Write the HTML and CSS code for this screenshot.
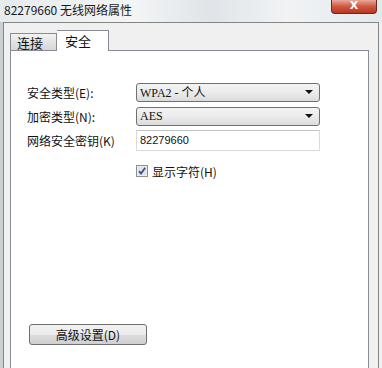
FILE: index.html
```html
<!DOCTYPE html>
<html>
<head>
    <meta charset="utf-8">
    <title>82279660 无线网络属性</title>
    <link rel="stylesheet" href="styles.css">
</head>
<body>
    <div class="janela">
        <div class="barra-titulo">
            <span class="titulo">82279660 无线网络属性</span>
            <span class="fechar">X</span>
        </div>
        <div class="dialogo">
            <div class="abas">
                <div class="aba">连接</div>
                <div class="aba ativa">安全</div>
            </div>
            <div class="painel">
                <div class="linha">
                    <span class="rotulo">安全类型(E):</span>
                    <div class="combo"><span class="valor serif">WPA2 - 个人</span><span class="seta"></span></div>
                </div>
                <div class="linha">
                    <span class="rotulo">加密类型(N):</span>
                    <div class="combo"><span class="valor serif">AES</span><span class="seta"></span></div>
                </div>
                <div class="linha linha-chave">
                    <span class="rotulo">网络安全密钥(K)</span>
                    <div class="campo">82279660</div>
                </div>
                <div class="linha linha-check">
                    <span class="rotulo"></span>
                    <label class="check">
                        <svg width="12" height="12" viewBox="0 0 12 12">
                            <rect x="0.5" y="0.5" width="11" height="11" fill="#f4f4f4" stroke="#8e8f8f"/>
                            <rect x="1.5" y="1.5" width="9" height="9" fill="#e2e5e8"/>
                            <path d="M3 6.2 L5 8.6 L9.2 2.8" fill="none" stroke="#3d4f80" stroke-width="1.8"/>
                        </svg>
                        <span>显示字符(H)</span>
                    </label>
                </div>
                <div class="rodape">
                    <button class="botao">高级设置(D)</button>
                </div>
            </div>
        </div>
    </div>
</body>
</html>
```

FILE: styles.css
```css
body {
    margin: 0;
    font-family: "Noto Sans CJK SC", "Liberation Sans", sans-serif;
    font-size: 12px;
    color: #111;
    background-color: #e7ebee;
    overflow: hidden;
}
.janela {
    width: 382px;
    height: 368px;
    background: linear-gradient(90deg, #c9ced2 0px, #c9ced2 3px, #e9edf0 3px, #e9edf0 379px, #eef1f3 379px);
}
.barra-titulo {
    height: 22px;
    display: flex;
    justify-content: space-between;
    align-items: flex-start;
    background: linear-gradient(90deg, #e6ebee 0%, #f3f5f6 35%, #dfe4e8 55%, #f1f3f5 75%, #e4e9ec 100%);
}
.titulo {
    padding: 2px 0 0 4px;
    line-height: 16px;
    color: #1a1a1a;
}
.fechar {
    width: 44px;
    height: 13px;
    margin-right: 5px;
    border: 1px solid #6b2a20;
    border-top: none;
    border-radius: 0 0 4px 4px;
    background: linear-gradient(#e9a99c, #d0583f 50%, #b9361f);
    color: #fff;
    font-family: "DejaVu Sans", sans-serif;
    font-weight: bold;
    font-size: 11px;
    line-height: 11px;
    text-align: center;
}
.dialogo {
    margin-left: 3px;
    width: 376px;
    height: 346px;
    box-sizing: border-box;
    border: 1px solid #858585;
    border-bottom: none;
    background-color: #f0f0f0;
    padding: 7px 9px 0 6px;
}
.abas {
    display: flex;
    align-items: flex-end;
    height: 20px;
    position: relative;
    z-index: 1;
}
.aba {
    width: 47px;
    height: 17px;
    box-sizing: border-box;
    border: 1px solid #898c95;
    border-bottom: none;
    background: linear-gradient(#f3f3f3, #e3e3e3 50%, #d6d6d6);
    padding-left: 6px;
    font-size: 13px;
    line-height: 17px;
}
.aba.ativa {
    width: 52px;
    height: 21px;
    margin-bottom: -1px;
    border-left: none;
    background-color: #fff;
    background-image: none;
    padding-left: 8px;
    line-height: 20px;
}
.painel {
    height: 318px;
    box-sizing: border-box;
    border: 1px solid #898c95;
    border-bottom: none;
    background-color: #fff;
    padding: 31px 0 0 16px;
}
.linha {
    display: flex;
    align-items: center;
    height: 20px;
    margin-bottom: 4px;
}
.linha-chave {
    margin-top: 2px;
    height: 21px;
    margin-bottom: 10px;
}
.rotulo {
    width: 109px;
    flex-shrink: 0;
}
.combo {
    width: 184px;
    height: 19px;
    box-sizing: border-box;
    border: 1px solid #707070;
    border-radius: 3px;
    background: linear-gradient(#f4f4f4, #ebebeb 50%, #dbdbdb);
    display: flex;
    align-items: center;
    justify-content: space-between;
    padding: 0 6px 0 3px;
}
.serif {
    font-family: "Liberation Serif", "Noto Sans CJK SC", serif;
    font-size: 12px;
}
.seta {
    width: 0;
    height: 0;
    border-left: 4px solid transparent;
    border-right: 4px solid transparent;
    border-top: 4px solid #111;
}
.campo {
    width: 184px;
    height: 21px;
    box-sizing: border-box;
    border: 1px solid #d8dadd;
    border-top-color: #bfc3c8;
    padding-left: 3px;
    font-family: "Liberation Sans", sans-serif;
    font-size: 11px;
    line-height: 19px;
}
.check {
    display: flex;
    align-items: center;
    gap: 4px;
}
.check span {
    font-size: 12px;
}
.rodape {
    margin-top: 143px;
    padding-left: 2px;
}
.botao {
    width: 118px;
    height: 21px;
    border: 1px solid #707070;
    border-radius: 3px;
    background: linear-gradient(#f2f2f2, #ebebeb 50%, #dddddd 51%, #cfcfcf);
    font-family: "Noto Sans CJK SC", sans-serif;
    font-size: 12px;
    color: #111;
    padding: 0;
}
```
